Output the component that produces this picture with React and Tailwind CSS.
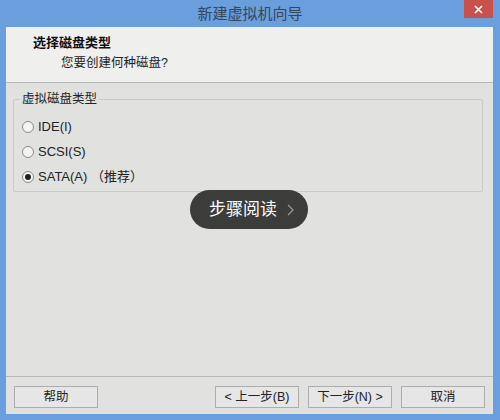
import React, { useState } from 'react';

const FONT = { fontFamily: '"Liberation Sans", "Noto Sans CJK SC", sans-serif' };

function Radio({ checked, label, onClick }) {
  return (
    <div className="flex items-center h-[25px] cursor-default" onClick={onClick}>
      <span className="w-[12px] h-[12px] rounded-full border border-[#8a8a8a] bg-[#f4f4f4] flex items-center justify-center">
        {checked && <span className="w-[6px] h-[6px] rounded-full bg-[#222]" />}
      </span>
      <span className="ml-[4px] text-[13px] text-[#222]">{label}</span>
    </div>
  );
}

function Button({ children, className = '' }) {
  return (
    <button
      type="button"
      className={`h-[22px] border border-[#adadad] bg-[#e6e6e6] text-[12.5px] text-[#222] ${className}`}
    >
      {children}
    </button>
  );
}

export default function App() {
  const [disk, setDisk] = useState('sata');

  return (
    <div className="w-[500px] h-[420px] bg-[#6a9edc] flex flex-col overflow-hidden" style={FONT}>
      {/* title bar */}
      <div className="h-[27px] relative flex items-center justify-center">
        <span className="text-[15px] text-[#34475c] pt-[1px]">新建虚拟机向导</span>
        <div className="absolute right-[7px] top-0 w-[29px] h-[18px] bg-[#c8514b] flex items-center justify-center">
          <svg width="9" height="9" viewBox="0 0 9 9">
            <path d="M1 1 L8 8 M8 1 L1 8" stroke="#fff" strokeWidth="1.6" />
          </svg>
        </div>
      </div>

      <div className="flex-1 mx-[6px] mr-[7px] mb-[6px] flex flex-col bg-[#e1e2df]">
        {/* header */}
        <div className="h-[56px] bg-[#efefed] border-b border-[#b8b9b6] pl-[27px] pt-[7px]">
          <div className="text-[13px] font-bold text-[#111] leading-[18px]">选择磁盘类型</div>
          <div className="text-[12.5px] text-[#222] leading-[18px] pl-[28px] mt-[2px]">您要创建何种磁盘?</div>
        </div>

        {/* content */}
        <div className="flex-1 px-[7px] pt-[16px] relative">
          <div className="relative border border-[#c9cac7] rounded-[2px] h-[93px] w-[470px] pt-[14px] pl-[8px]">
            <span className="absolute left-[6px] top-[-9px] bg-[#e1e2df] px-[2px] text-[12.5px] text-[#222] leading-[16px]">
              虚拟磁盘类型
            </span>
            <Radio checked={disk === 'ide'} label="IDE(I)" onClick={() => setDisk('ide')} />
            <Radio checked={disk === 'scsi'} label="SCSI(S)" onClick={() => setDisk('scsi')} />
            <Radio checked={disk === 'sata'} label="SATA(A) （推荐）" onClick={() => setDisk('sata')} />
          </div>

          {/* floating pill */}
          <div className="absolute left-[184px] top-[107px] w-[118px] h-[39px] rounded-full bg-[#3c3c3a] flex items-center pl-[19px]">
            <span className="text-[17px] text-white">步骤阅读</span>
            <svg className="ml-[10px]" width="7" height="12" viewBox="0 0 7 12">
              <path d="M1 1 L6 6 L1 11" stroke="#9a9a98" strokeWidth="1.2" fill="none" />
            </svg>
          </div>
        </div>

        {/* footer */}
        <div className="h-[38px] border-t border-[#b8b9b6] flex items-start px-[8px] pt-[9px]">
          <Button className="w-[84px]">帮助</Button>
          <div className="flex-1" />
          <Button className="w-[84px]">&lt; 上一步(B)</Button>
          <Button className="w-[84px] ml-[9px] border-[#7a9fb8]">下一步(N) &gt;</Button>
          <Button className="w-[84px] ml-[9px]">取消</Button>
        </div>
      </div>
    </div>
  );
}
